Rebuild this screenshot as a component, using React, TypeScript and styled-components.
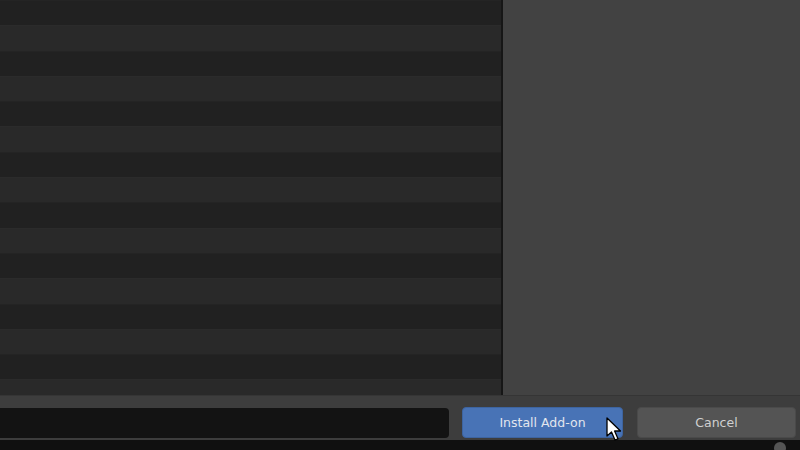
import React from "react";
import styled, { createGlobalStyle } from "styled-components";

const Global = createGlobalStyle`
  html, body { margin: 0; padding: 0; background: #101010; }
  body { font-family: "DejaVu Sans", "Liberation Sans", sans-serif; }
  #root { width: 800px; height: 450px; overflow: hidden; }
`;

const Window = styled.div`
  position: relative;
  width: 800px;
  height: 450px;
  display: flex;
  flex-direction: column;
  background: #101010;
  overflow: hidden;
`;

const Main = styled.div`
  height: 395px;
  display: flex;
  flex-direction: row;
`;

const FileList = styled.div`
  width: 501px;
  height: 395px;
  overflow: hidden;
  display: flex;
  flex-direction: column;
  background: #212121;
`;

const Row = styled.div<{ $alt: boolean }>`
  flex: 0 0 25.3px;
  box-sizing: border-box;
  background: ${(p) => (p.$alt ? "#292929" : "#212121")};
  border-top: 1px solid ${(p) => (p.$alt ? "#2b2b2b" : "#242424")};
`;

const Divider = styled.div`
  width: 2px;
  background: #161616;
`;

const SidePanel = styled.div`
  flex: 1;
  background: #424242;
`;

const Footer = styled.div`
  height: 45px;
  box-sizing: border-box;
  background: #3d3d3d;
  border-top: 1px solid #353535;
  padding: 11px 4px 2px 0;
  display: flex;
  flex-direction: row;
  align-items: flex-start;
  gap: 13px;
`;

const PathField = styled.div`
  flex: 0 0 449px;
  height: 30px;
  margin-top: 1px;
  background: #131313;
  border-radius: 0 4px 4px 0;
`;

const Button = styled.div<{ $primary?: boolean }>`
  height: 31px;
  box-sizing: border-box;
  display: flex;
  align-items: center;
  justify-content: center;
  border-radius: 4px;
  font-size: 12.5px;
  color: ${(p) => (p.$primary ? "#e2e6ee" : "#d0d0d0")};
  background: ${(p) => (p.$primary ? "#4873b6" : "#545454")};
  border: 1px solid ${(p) => (p.$primary ? "#3d64a0" : "#4a4a4a")};
`;

const InstallButton = styled(Button)`
  flex: 0 0 161px;
`;

const CancelButton = styled(Button)`
  flex: 0 0 159px;
  margin-left: 1px;
`;

const BottomStrip = styled.div`
  flex: 1;
  background: #101010;
`;

const Cursor = styled.svg`
  position: absolute;
  left: 606px;
  top: 417px;
`;

const Handle = styled.div`
  position: absolute;
  left: 774px;
  top: 442px;
  width: 12px;
  height: 12px;
  border-radius: 50%;
  background: #555555;
`;

export default function App() {
  const rows = Array.from({ length: 16 }, (_, i) => i);
  return (
    <>
      <Global />
      <Window>
        <Main>
          <FileList>
            {rows.map((i) => (
              <Row key={i} $alt={i % 2 === 1} />
            ))}
          </FileList>
          <Divider />
          <SidePanel />
        </Main>
        <Footer>
          <PathField />
          <InstallButton $primary>Install Add-on</InstallButton>
          <CancelButton>Cancel</CancelButton>
        </Footer>
        <BottomStrip />
        <Handle />
        <Cursor width="18" height="26" viewBox="0 0 18 26">
          <path
            d="M1 1 L1 19 L5.5 15 L9 23 L12 21.8 L8.6 14 L14.5 14 Z"
            fill="#ffffff"
            stroke="#000000"
            strokeWidth="1.3"
            strokeLinejoin="round"
          />
        </Cursor>
      </Window>
    </>
  );
}
